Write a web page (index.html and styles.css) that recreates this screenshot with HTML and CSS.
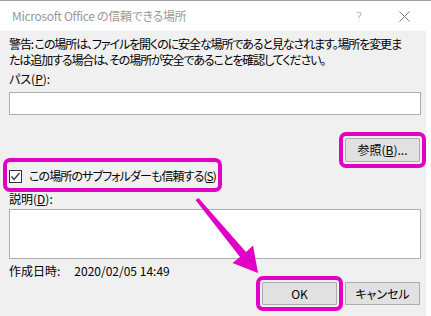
FILE: index.html
```html
<!DOCTYPE html>
<html lang="ja">
<head>
  <meta charset="UTF-8">
  <title>Microsoft Office の信頼できる場所</title>
  <link rel="stylesheet" href="styles.css">
</head>
<body>
  <div class="dialog">
    <div class="titlebar">
      <span class="title">Microsoft Office の信頼できる場所</span>
      <span class="tb-help">?</span>
      <span class="tb-close">
        <svg width="11" height="11" viewBox="0 0 11 11"><path d="M0.5 0.5L10.5 10.5M10.5 0.5L0.5 10.5" stroke="#7a7a7a" stroke-width="1" fill="none"/></svg>
      </span>
    </div>

    <div class="content">
      <p class="warning">警告: この場所は、ファイルを開くのに安全な場所であると見なされます。場所を変更ま<br>たは追加する場合は、その場所が安全であることを確認してください。</p>

      <div class="label path-label">パス(<u>P</u>):</div>
      <div class="textbox path-box"></div>

      <div class="browse-row">
        <button class="btn marked">参照(<u>B</u>)...</button>
      </div>

      <div class="check-row">
        <label class="check marked">
          <span class="checkbox">
            <svg width="11" height="11" viewBox="0 0 11 11"><path d="M1.5 5.5L4 8.5L9.5 2" stroke="#333" stroke-width="1.2" fill="none"/></svg>
          </span>
          <span class="check-text">この場所のサブフォルダーも信頼する(<u>S</u>)</span>
        </label>
      </div>

      <div class="label desc-label">説明(<u>D</u>):</div>
      <div class="textbox desc-box"></div>

      <div class="created">
        <span>作成日時:</span>
        <span>2020/02/05 14:49</span>
      </div>

      <div class="actions">
        <button class="btn marked">OK</button>
        <button class="btn">キャンセル</button>
      </div>
    </div>

    <!-- annotation arrow -->
    <svg class="arrow" width="431" height="316" viewBox="0 0 431 316">
      <polygon points="195.5,200 198.5,198 246,252 253,245.5 258,273 232.5,263 240,257" fill="#e100c6"/>
    </svg>
  </div>
</body>
</html>
```

FILE: styles.css
```css
:root {
  --face: #f0f0f0;
  --mark: #e100c6;
  --line: #adadad;
}

* {
  box-sizing: border-box;
}

body {
  margin: 0;
  background: #fff;
  font-family: "Noto Sans CJK JP", "Noto Sans", sans-serif;
  font-size: 12px;
  font-feature-settings: "palt";
  color: #000;
}

.dialog {
  position: relative;
  width: 431px;
  height: 316px;
  overflow: hidden;
}

.titlebar {
  display: flex;
  align-items: center;
  height: 31px;
  border-top: 1px solid #a0a0a0;
  padding-left: 12px;
  color: #999;
}

.title {
  flex: 1;
  line-height: 16px;
  letter-spacing: -0.3px;
}

.tb-help {
  width: 36px;
  text-align: center;
  font-size: 13px;
  color: #999;
  font-family: "DejaVu Sans", sans-serif;
  font-weight: 200;
}

.tb-close {
  display: flex;
  justify-content: center;
  width: 54px;
}

.content {
  width: 426px;
  height: 285px;
  background: var(--face);
  padding: 5px 5px 0 9px;
  display: flex;
  flex-direction: column;
}

.warning {
  margin: 0;
  line-height: 16px;
  white-space: nowrap;
  letter-spacing: -1.1px;
}

.label {
  line-height: 16px;
}

.path-label {
  margin-top: 3px;
}

.textbox {
  background: #fff;
  border: 1px solid var(--line);
}

.path-box {
  margin-top: 5px;
  height: 23px;
}

.browse-row {
  display: flex;
  justify-content: flex-end;
  margin-top: 23px;
  padding-right: 1px;
}

.btn {
  width: 75px;
  height: 24px;
  padding: 0;
  background: #e1e1e1;
  border: 1px solid var(--line);
  border-radius: 0;
  font: inherit;
  line-height: 16px;
  color: #000;
}

.marked {
  outline: 4px solid var(--mark);
  outline-offset: 2px;
  border-radius: 1px;
}

.check-row {
  display: flex;
  margin-top: 2px;
}

.check {
  display: flex;
  align-items: center;
  gap: 7px;
  padding: 4px 0 2px 0;
  line-height: 16px;
}

.check-text {
  letter-spacing: -0.9px;
}

.checkbox {
  display: flex;
  align-items: center;
  justify-content: center;
  width: 13px;
  height: 13px;
  background: #fff;
  border: 1px solid #333;
}

.desc-label {
  margin-top: 5px;
}

.desc-box {
  margin-top: 2px;
  height: 50px;
}

.created {
  display: flex;
  gap: 14px;
  margin-top: 4px;
  line-height: 16px;
}

.actions {
  display: flex;
  justify-content: flex-end;
  gap: 8px;
  margin-top: 3px;
  padding-right: 1px;
}

.actions .btn {
  height: 23px;
}

.arrow {
  position: absolute;
  left: 0;
  top: 0;
  pointer-events: none;
}
```
